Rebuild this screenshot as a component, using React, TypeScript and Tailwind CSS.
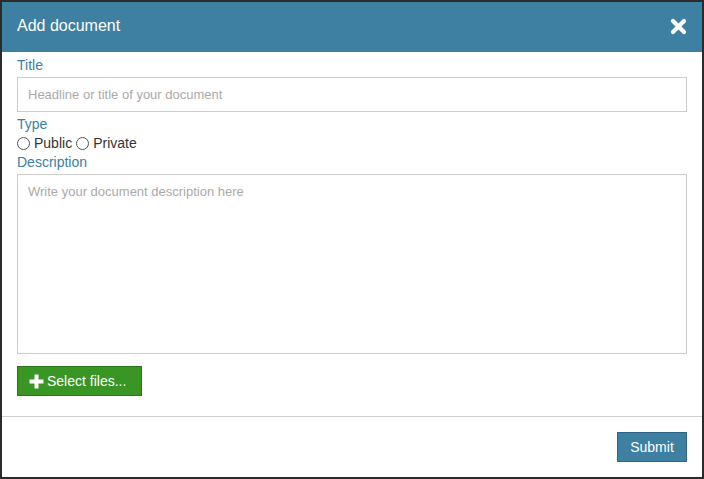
const LABEL = 'block text-[14px] leading-[19px] text-[#3b80a6]';

export default function App() {
  return (
    <div className="w-[704px] h-[479px] bg-[#2b2b2b] p-[2px] font-['Liberation_Sans',Arial,sans-serif]">
      <div className="w-[700px] h-[475px] bg-white flex flex-col">
        {/* Header */}
        <div className="h-[50px] shrink-0 bg-[#3d80a2] flex items-center justify-between pl-[15px] pr-[15px]">
          <h2 className="text-[16px] leading-[20px] text-white -mt-[3px]">Add document</h2>
          <button className="w-[17px] h-[17px] -mt-[1px] flex items-center justify-center">
            <svg width="17" height="17" viewBox="0 0 17 17">
              <path d="M3 3 L14 14 M14 3 L3 14" stroke="white" strokeWidth="4.2" strokeLinecap="round" fill="none" />
            </svg>
          </button>
        </div>

        {/* Body */}
        <div className="px-[15px] pt-[4px] pb-[20px]">
          <label className={LABEL}>Title</label>
          <input
            type="text"
            placeholder="Headline or title of your document"
            className="mt-[2px] mb-[3px] block w-full h-[35px] border border-[#cccccc] px-[10px] text-[13px] text-[#333] placeholder:text-[#aaaaaa] outline-none"
          />
          <label className={LABEL}>Type</label>
          <div className="flex items-center h-[19px] text-[14px] text-[#333]">
            <input type="radio" name="type" className="appearance-none w-[13px] h-[13px] rounded-full border border-[#555] bg-white" />
            <span className="ml-[4px]">Public</span>
            <input type="radio" name="type" className="appearance-none ml-[4px] w-[13px] h-[13px] rounded-full border border-[#555] bg-white" />
            <span className="ml-[4px]">Private</span>
          </div>
          <label className={LABEL}>Description</label>
          <textarea
            placeholder="Write your document description here"
            className="mt-[2px] block w-full h-[180px] border border-[#cccccc] px-[10px] py-[8px] text-[13px] leading-[18px] text-[#333] placeholder:text-[#aaaaaa] outline-none resize-none"
          />
          <button className="mt-[12px] h-[30px] w-[125px] bg-[#3a9624] border border-[#2a7419] flex items-center pl-[11px] text-[14px] text-white">
            <svg width="15" height="15" viewBox="0 0 15 15" className="mr-[3px]">
              <path d="M5.5 0.5h4v5h5v4h-5v5h-4v-5h-5v-4h5z" fill="white" />
            </svg>
            <span>Select files...</span>
          </button>
        </div>

        <div className="h-px bg-[#d0d0d0]" />

        {/* Footer */}
        <div className="p-[15px] flex justify-end">
          <button className="h-[30px] w-[70px] bg-[#3d80a2] border border-[#2c6586] text-[14px] text-white">
            Submit
          </button>
        </div>
      </div>
    </div>
  );
}
